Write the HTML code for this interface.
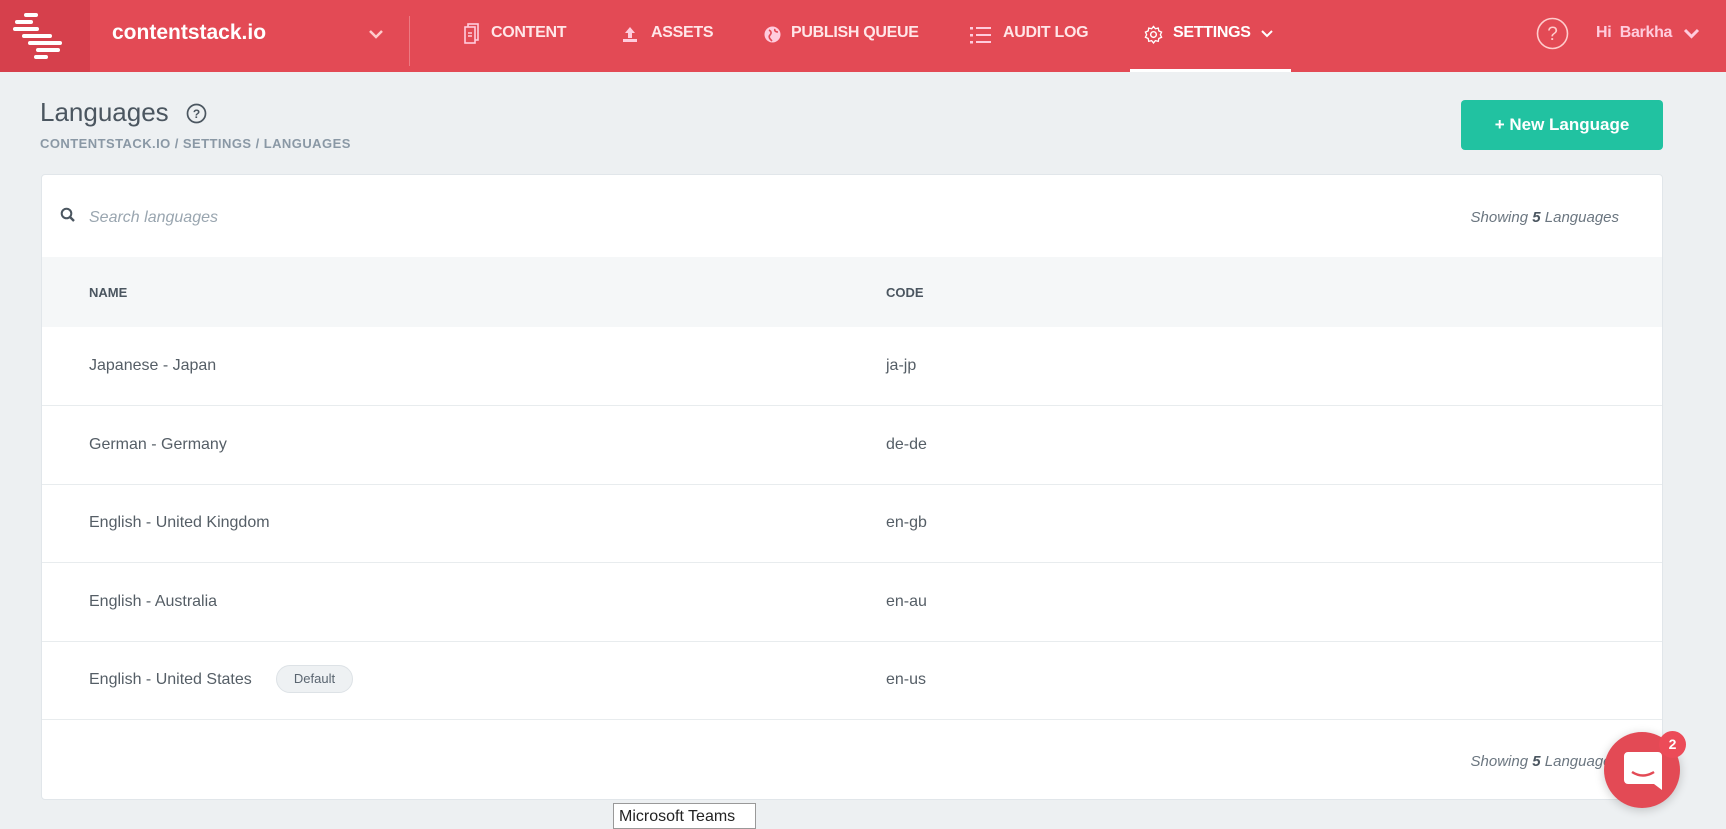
<!DOCTYPE html>
<html><head><meta charset="utf-8"><style>
*{box-sizing:border-box;margin:0;padding:0}
body{width:1726px;height:827px;overflow:hidden;background:#edf0f2;font-family:"Liberation Sans",sans-serif;position:relative}
.hdr{position:absolute;left:0;top:0;width:1726px;height:72px;background:#e34a55}
.logo{position:absolute;left:0;top:0;width:90px;height:72px;background:#d6404c}
.w{position:absolute;color:#fff}
.nav{position:absolute;top:24px;font-size:16px;font-weight:bold;letter-spacing:-0.3px;color:#ffe6e8}
.card{position:absolute;left:41px;top:174px;width:1622px;height:626px;background:#fff;border:1px solid #e1e6ea;border-radius:4px;overflow:hidden}
.row{position:absolute;left:0;width:100%;height:79px;border-bottom:1px solid #e8ecee;font-size:16px;color:#555e66}
.row span{position:absolute;top:30px}
</style></head><body>
<div class="hdr">
 <div class="logo">
  <svg width="90" height="72" viewBox="0 0 90 72"><g fill="#fff">
   <rect x="24" y="13" width="14" height="4" rx="2"/><rect x="15" y="20" width="18" height="4" rx="2"/><rect x="13" y="27" width="26" height="4" rx="2"/><rect x="22" y="34" width="30" height="4" rx="2"/><rect x="28" y="41" width="34" height="4" rx="2"/><rect x="36" y="48" width="24" height="4" rx="2"/><rect x="34" y="55" width="14" height="4" rx="2"/></g></svg>
 </div>
 <div class="w" style="left:112px;top:21px;font-size:21px;font-weight:bold">contentstack.io</div>
 <svg style="position:absolute;left:368px;top:29px" width="16" height="12"><path d="M2 2l6 6 6-6" stroke="#fcc" stroke-width="2.5" fill="none"/></svg>
 <div style="position:absolute;left:409px;top:16px;width:1px;height:50px;background:#ec7a82"></div>
 <svg style="position:absolute;left:464px;top:23px" width="16" height="22"><rect x="4" y="1" width="10" height="16" fill="none" stroke="#fcd" stroke-width="1.6"/><rect x="1" y="4" width="10" height="16" fill="#e34a55" stroke="#fcd" stroke-width="1.6"/><path d="M4 10h4M4 13h4" stroke="#fcd" stroke-width="1.4"/></svg>
 <div class="nav" style="left:491px">CONTENT</div>
 <svg style="position:absolute;left:621px;top:25px" width="18" height="18"><path d="M9 2l5 6h-3v5H7V8H4z" fill="#fcd"/><rect x="2" y="14" width="14" height="3" fill="#fcd"/></svg>
 <div class="nav" style="left:651px">ASSETS</div>
 <svg style="position:absolute;left:764px;top:26px" width="17" height="17"><circle cx="8.5" cy="8.5" r="8" fill="#fcd"/><path d="M5 4c2 1 3 3 1 5s0 4 2 6M11 3c-1 2 1 3 3 3" stroke="#e34a55" stroke-width="1.6" fill="none"/></svg>
 <div class="nav" style="left:791px">PUBLISH QUEUE</div>
 <svg style="position:absolute;left:970px;top:26px" width="22" height="18"><g fill="#fcd"><rect x="0" y="1" width="3" height="2.5"/><rect x="0" y="8" width="3" height="2.5"/><rect x="0" y="15" width="3" height="2.5"/><rect x="6" y="1" width="15" height="2"/><rect x="6" y="8" width="15" height="2"/><rect x="6" y="15" width="15" height="2"/></g></svg>
 <div class="nav" style="left:1003px">AUDIT LOG</div>
 <svg style="position:absolute;left:1144px;top:25px" width="19" height="19" viewBox="0 0 20 20"><circle cx="10" cy="10" r="3" fill="none" stroke="#fff" stroke-width="1.5"/><path d="M10 1.5l2 2.5 3-.8.6 3 2.9 1.3-1.3 2.7 1.3 2.7-2.9 1.3-.6 3-3-.8-2 2.5-2-2.5-3 .8-.6-3-2.9-1.3 1.3-2.7-1.3-2.7 2.9-1.3.6-3 3 .8z" fill="none" stroke="#fff" stroke-width="1.4"/></svg>
 <div class="nav" style="left:1173px;color:#fff">SETTINGS</div>
 <svg style="position:absolute;left:1261px;top:30px" width="12" height="9"><path d="M1 1l5 5 5-5" stroke="#fff" stroke-width="2" fill="none"/></svg>
 <div style="position:absolute;left:1130px;top:69px;width:161px;height:3px;background:#fff"></div>
 <svg style="position:absolute;left:1536px;top:17px" width="33" height="33"><circle cx="16.5" cy="16.5" r="15" fill="none" stroke="#fcc" stroke-width="1.6"/><text x="16.5" y="23" text-anchor="middle" font-family="Liberation Sans" font-size="19" fill="#fcc">?</text></svg>
 <div class="nav" style="left:1596px;color:#fcd">Hi&nbsp; Barkha</div>
 <svg style="position:absolute;left:1683px;top:28px" width="17" height="13"><path d="M2 2l6.5 6.5L15 2" stroke="#fcd" stroke-width="3" fill="none"/></svg>
</div>

<div style="position:absolute;left:40px;top:97px;font-size:26px;color:#4b5660">Languages</div>
<svg style="position:absolute;left:186px;top:103px" width="21" height="21"><circle cx="10.5" cy="10.5" r="9" fill="none" stroke="#4b5660" stroke-width="1.7"/><text x="10.5" y="15" text-anchor="middle" font-family="Liberation Sans" font-weight="bold" font-size="12" fill="#4b5660">?</text></svg>
<div style="position:absolute;left:40px;top:136px;font-size:13px;font-weight:bold;color:#8a98a5;letter-spacing:0.45px">CONTENTSTACK.IO / SETTINGS / LANGUAGES</div>
<div style="position:absolute;left:1461px;top:100px;width:202px;height:50px;background:#21c2a1;border-radius:4px;color:#fff;font-size:17px;font-weight:bold;text-align:center;line-height:50px">+ New Language</div>

<div class="card">
 <svg style="position:absolute;left:18px;top:32px" width="16" height="16"><circle cx="6.5" cy="6.5" r="4.8" fill="none" stroke="#4b5660" stroke-width="2"/><path d="M10 10l4 4" stroke="#4b5660" stroke-width="2.4"/></svg>
 <div style="position:absolute;left:47px;top:34px;font-size:16px;font-style:italic;color:#9aa6b0">Search languages</div>
 <div style="position:absolute;right:43px;top:34px;font-size:15px;font-style:italic;color:#6b7680">Showing <b style="color:#4b5660">5</b> Languages</div>
 <div style="position:absolute;left:0;top:82px;width:100%;height:70px;background:#f5f7f8;font-size:13px;font-weight:bold;color:#4b5660">
  <span style="position:absolute;left:47px;top:28px">NAME</span><span style="position:absolute;left:844px;top:28px">CODE</span></div>
 <div class="row" style="top:152px"><span style="left:47px">Japanese - Japan</span><span style="left:844px">ja-jp</span></div>
 <div class="row" style="top:231px"><span style="left:47px">German - Germany</span><span style="left:844px">de-de</span></div>
 <div class="row" style="top:309px"><span style="left:47px">English - United Kingdom</span><span style="left:844px">en-gb</span></div>
 <div class="row" style="top:388px"><span style="left:47px">English - Australia</span><span style="left:844px">en-au</span></div>
 <div class="row" style="top:466px"><span style="left:47px">English - United States</span><span style="left:234px;top:24px;width:77px;height:28px;border:1px solid #dde2e6;background:#eef1f3;border-radius:14px;font-size:13px;text-align:center;line-height:26px;color:#5a6570">Default</span><span style="left:844px">en-us</span></div>
 <div style="position:absolute;right:43px;top:578px;font-size:15px;font-style:italic;color:#6b7680">Showing <b style="color:#4b5660">5</b> Languages</div>
</div>

<div style="position:absolute;left:1604px;top:732px;width:76px;height:76px;border-radius:50%;background:#e34a55;box-shadow:0 2px 10px rgba(0,0,0,.2)"></div>
<svg style="position:absolute;left:1624px;top:752px" width="38" height="40"><path d="M4 0h30a4 4 0 0 1 4 4v34l-8-6H4a4 4 0 0 1-4-4V4a4 4 0 0 1 4-4z" fill="#fff"/><path d="M8 20q11 7 22 0" stroke="#e34a55" stroke-width="2.5" fill="none"/></svg>
<div style="position:absolute;left:1659px;top:731px;width:27px;height:27px;border-radius:50%;background:#ec4b58;color:#fff;font-size:14px;font-weight:bold;text-align:center;line-height:27px">2</div>
<div style="position:absolute;left:613px;top:803px;width:143px;height:26px;background:#fff;border:1px solid #999;font-size:16px;color:#222;padding:4px 5px">Microsoft Teams</div>
</body></html>
